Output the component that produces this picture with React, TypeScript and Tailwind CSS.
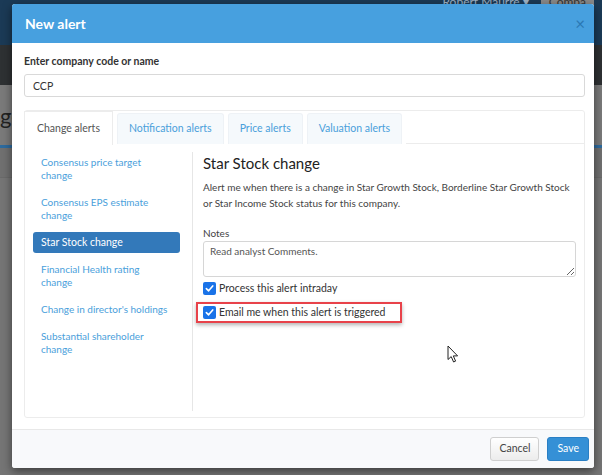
import { useState } from 'react';

// lines are split the way the sidebar wraps them
const navItems = [
  ['Consensus price target', 'change'],
  ['Consensus EPS estimate', 'change'],
  ['Star Stock change'],
  ['Financial Health rating', 'change'],
  ["Change in director's holdings"],
  ['Substantial shareholder', 'change'],
];

const tabs = ['Change alerts', 'Notification alerts', 'Price alerts', 'Valuation alerts'];

function Check() {
  return (
    <span className="flex h-[13px] w-[13px] shrink-0 items-center justify-center rounded-[2px] bg-[#1a73e8]">
      <svg width="9" height="9" viewBox="0 0 10 10" fill="none">
        <path d="M1.5 5.2 L4 7.6 L8.6 2.2" stroke="white" strokeWidth="1.8" strokeLinecap="round" strokeLinejoin="round" />
      </svg>
    </span>
  );
}

export default function App() {
  const [code, setCode] = useState('CCP');
  const [notes, setNotes] = useState('Read analyst Comments.');
  const active = 'Star Stock change';

  return (
    <div className="relative h-[475px] w-[602px] overflow-hidden bg-[#757575] font-['Lato',sans-serif]">
      {/* page behind the dialog */}
      <div className="flex h-[45px] items-start justify-end gap-3 bg-[#1b3a56] pr-2 text-[12px] leading-[12px] text-[#9fb3c6]">
        <span className="-mt-[4px]">Robert Maurre ▾</span>
        <span className="-mt-[4px] bg-[#8a8a8a] px-2 text-[#333]">Compa</span>
      </div>
      <div className="h-[40px] bg-[#2e3133]" />
      <div className="flex h-[60px] items-center bg-[#7a7a7a] text-[22px] text-[#222]">ge</div>
      <div className="h-[3px] bg-[#2e6b9e]" />
      <div className="h-[30px] border-b border-[#6a6a6a] bg-[#707070]" />

      {/* dialog */}
      <div className="absolute left-[12px] top-[4px] flex h-[464px] w-[582px] flex-col overflow-hidden rounded-[3px] bg-white shadow-[0_3px_10px_rgba(0,0,0,0.5)]">
        <div className="flex h-[39px] shrink-0 items-center justify-between bg-[#47a0df] pl-[13px] pr-[9px]">
          <span className="text-[14px] font-bold text-white">New alert</span>
          <span className="text-[17px] leading-none text-[#2b78b4]">×</span>
        </div>

        <div className="flex flex-1 flex-col pl-[12px] pr-[9px] pt-[12px] text-[10px] text-[#333]">
          <label className="block text-[10.5px] font-bold leading-[13px]">Enter company code or name</label>
          <input
            value={code}
            onChange={(e) => setCode(e.target.value)}
            className="mt-[6px] h-[23px] w-full rounded-[3px] border border-[#d9d9d9] px-[8px] text-[10.5px] text-[#333] outline-none"
          />

          <div className="mt-[13px] flex h-[308px] flex-col rounded-[3px] border border-[#ececec]">
            <div className="flex h-[33px] shrink-0 items-end gap-[4px]">
              {tabs.map((t, i) =>
                i === 0 ? (
                  <div key={t} className="-mb-px -ml-px -mt-px flex h-[34px] items-center border border-b-0 border-[#ececec] bg-white px-[12px] text-[10.5px] text-[#555]">
                    {t}
                  </div>
                ) : (
                  <div key={t} className="flex h-[31px] items-center rounded-t-[3px] border border-b-0 border-[#eef2f6] bg-[#f5f9fc] px-[11px] text-[10.5px] text-[#4aa0db]">
                    {t}
                  </div>
                )
              )}
              <div className="h-px flex-1 self-end bg-[#ececec]" />
            </div>

            <div className="flex flex-1 pb-[6px] pt-[8px]">
              <div className="flex w-[168px] shrink-0 flex-col gap-[6px] border-r border-[#e6e6e6] pl-[8px] pr-[12px]">
                {navItems.map((lines) => {
                  const name = lines.join(' ');
                  return (
                    <div
                      key={name}
                      className={
                        name === active
                          ? 'rounded-[3px] bg-[#3379ba] px-[8px] py-[4px] text-[10.5px] leading-[13px] text-white'
                          : 'whitespace-nowrap px-[8px] py-[4px] text-[10px] leading-[13px] text-[#4aa0db]'
                      }
                    >
                      {lines.map((l) => (
                        <div key={l}>{l}</div>
                      ))}
                    </div>
                  );
                })}
              </div>

              <div className="flex-1 pl-[10px] pr-[8px] pt-[2px]">
                <h3 className="text-[15px] leading-[18px] text-[#222]">Star Stock change</h3>
                <p className="mt-[7px] pr-[4px] leading-[16px] text-[#444]">
                  Alert me when there is a change in Star Growth Stock, Borderline Star Growth Stock or Star Income Stock status for this company.
                </p>
                <div className="mt-[16px] leading-[13px] text-[#444]">Notes</div>
                <textarea
                  value={notes}
                  onChange={(e) => setNotes(e.target.value)}
                  className="mt-[1px] block h-[36px] w-full rounded-[3px] border border-[#d6d6d6] px-[6px] py-[3px] text-[10px] leading-[13px] text-[#555] outline-none"
                />
                <div className="mt-[5px] flex items-center gap-[3px] text-[10.5px] leading-[13px] text-[#333]">
                  <Check />
                  <span>Process this alert intraday</span>
                </div>
                <div className="-ml-[7px] mt-[7px] flex w-[206px] items-center gap-[3px] border-2 border-[#e8424a] py-[2px] pl-[5px] text-[10.5px] leading-[13px] text-[#333] shadow-[0_2px_4px_rgba(0,0,0,0.3)]">
                  <Check />
                  <span>Email me when this alert is triggered</span>
                </div>
              </div>
            </div>
          </div>
        </div>

        <div className="flex h-[39px] shrink-0 items-center justify-end gap-[8px] border-t border-[#e8e8e8] bg-[#f8f9fb] pr-[5px]">
          <button className="h-[24px] rounded-[3px] border border-[#cfcfcf] bg-gradient-to-b from-white to-[#ececec] px-[8px] text-[10.5px] text-[#444]">
            Cancel
          </button>
          <button className="h-[24px] rounded-[3px] border border-[#2a7fc4] bg-[#3590d6] px-[9px] text-[10.5px] text-white">
            Save
          </button>
        </div>
      </div>

      {/* mouse pointer */}
      <svg className="absolute left-[447px] top-[345px]" width="12" height="18" viewBox="0 0 12 18">
        <path d="M1 1 L1 14.5 L4.2 11.6 L6.6 17 L8.6 16.1 L6.3 10.9 L10.6 10.9 Z" fill="white" stroke="#222" strokeWidth="1" strokeLinejoin="round" />
      </svg>
    </div>
  );
}
